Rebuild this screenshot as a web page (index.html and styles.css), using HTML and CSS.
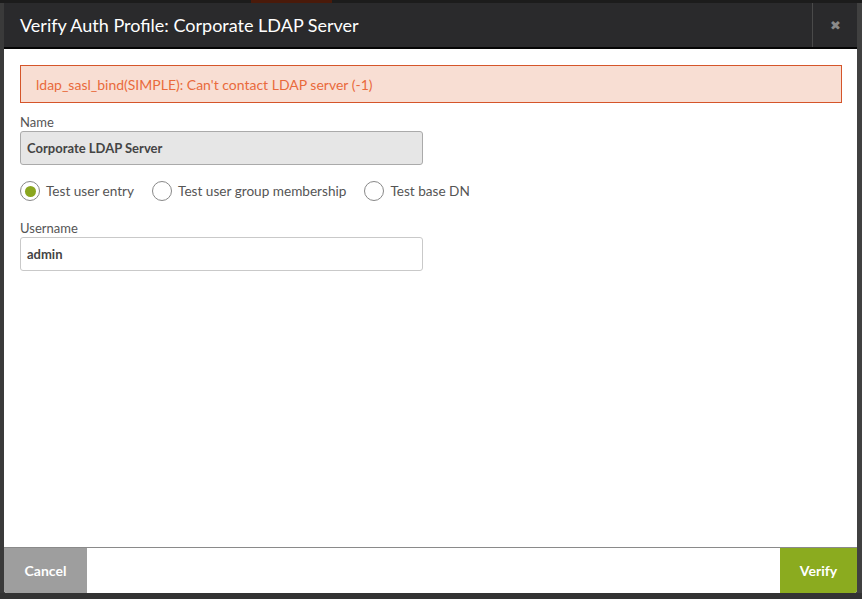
FILE: index.html
```html
<!DOCTYPE html>
<html>
<head>
<meta charset="utf-8">
<link rel="stylesheet" href="styles.css">
</head>
<body>
<div class="page">
  <div class="topstrip"><div class="topbar"></div></div>
  <div class="mid">
    <div class="gutter-left"></div>
    <div class="modal">
      <div class="modal-header">
        <h1 class="title">Verify Auth Profile: Corporate LDAP Server</h1>
        <div class="close">&#x2716;</div>
      </div>
      <div class="modal-body">
        <div class="alert">ldap_sasl_bind(SIMPLE): Can't contact LDAP server (-1)</div>
        <div class="field">
          <label class="label">Name</label>
          <div class="input input-disabled">Corporate LDAP Server</div>
        </div>
        <div class="radios">
          <div class="radio"><span class="circle checked"></span><span>Test user entry</span></div>
          <div class="radio"><span class="circle"></span><span>Test user group membership</span></div>
          <div class="radio"><span class="circle"></span><span>Test base DN</span></div>
        </div>
        <div class="field">
          <label class="label">Username</label>
          <div class="input">admin</div>
        </div>
      </div>
      <div class="modal-footer">
        <button class="btn btn-cancel">Cancel</button>
        <button class="btn btn-verify">Verify</button>
      </div>
    </div>
    <div class="gutter-right"></div>
  </div>
</div>
</body>
</html>
```
FILE: styles.css
```css
html, body {
  margin: 0;
  padding: 0;
}
body {
  background: #333333;
  font-family: Lato, "Open Sans", sans-serif;
  width: 862px;
  height: 599px;
  overflow: hidden;
}
.page {
  display: flex;
  flex-direction: column;
  height: 599px;
}
.topstrip {
  height: 3px;
  background: #1c1c1c;
  display: flex;
}
.topbar {
  margin-left: 251px;
  width: 81px;
  background: #4a1a0a;
}
.mid {
  display: flex;
  height: 590px;
}
.gutter-left {
  width: 4px;
  background: #3a3a3a;
}
.gutter-right {
  width: 5px;
  background: #404040;
}
.modal {
  width: 853px;
  display: flex;
  flex-direction: column;
  background: #ffffff;
  border-radius: 0 0 3px 3px;
  overflow: hidden;
}
.modal-header {
  height: 44px;
  background: #2a2a2c;
  border-bottom: 2px solid #050505;
  display: flex;
  align-items: center;
}
.title {
  flex: 1;
  margin: 0;
  padding-left: 16px;
  color: #ffffff;
  font-size: 18px;
  font-weight: 400;
}
.close {
  width: 44px;
  height: 44px;
  border-left: 1px solid #4a4a4a;
  display: flex;
  align-items: center;
  justify-content: center;
  color: #8a8a8a;
  font-size: 13px;
}
.modal-body {
  flex: 1;
  padding: 16px 15px 0 16px;
}
.alert {
  height: 36px;
  border: 1px solid #d5552a;
  background: #f8ded3;
  color: #e96a3c;
  font-size: 14px;
  display: flex;
  align-items: center;
  padding-left: 15px;
}
.field {
  display: flex;
  flex-direction: column;
}
.label {
  font-size: 13px;
  color: #555555;
  margin-top: 11px;
  margin-bottom: 1px;
}
.input {
  width: 395px;
  height: 32px;
  border: 1px solid #c9c9c9;
  border-radius: 3px;
  padding-left: 6px;
  display: flex;
  align-items: center;
  font-size: 13px;
  font-weight: 700;
  color: #444444;
}
.input-disabled {
  background: #e6e6e6;
  border-color: #aaaaaa;
}
.radios {
  display: flex;
  margin-top: 16px;
  margin-bottom: 8px;
  height: 20px;
  align-items: center;
}
.radio {
  display: flex;
  align-items: center;
  font-size: 13.6px;
  color: #555555;
  margin-right: 18px;
}
.circle {
  width: 18px;
  height: 18px;
  border: 1px solid #888888;
  border-radius: 50%;
  margin-right: 6px;
  display: flex;
  align-items: center;
  justify-content: center;
}
.circle.checked::after {
  content: "";
  width: 11px;
  height: 11px;
  border-radius: 50%;
  background: #8aa61f;
}
.modal-footer {
  height: 45px;
  border-top: 1px solid #8a8a8a;
  display: flex;
  justify-content: space-between;
}
.btn {
  border: 0;
  margin: 0;
  font-family: inherit;
  font-size: 14px;
  font-weight: 700;
  color: #ffffff;
  height: 45px;
}
.btn-cancel {
  width: 83px;
  background: #9e9e9e;
}
.btn-verify {
  width: 77px;
  background: #8bab1f;
}
```
